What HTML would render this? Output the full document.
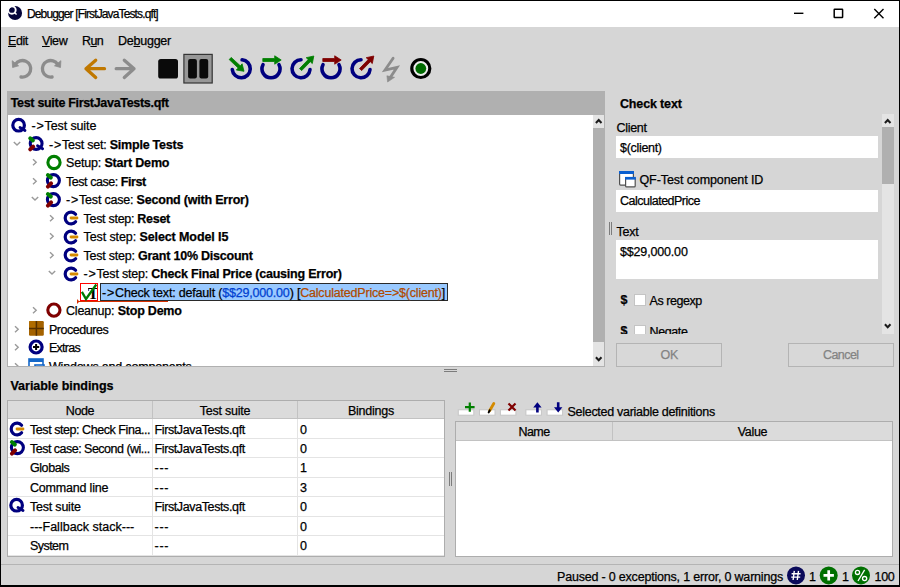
<!DOCTYPE html>
<html><head><meta charset="utf-8"><title>Debugger</title>
<style>
*{box-sizing:border-box;margin:0;padding:0}
html,body{width:900px;height:587px;overflow:hidden;background:#d6d6d6}
body{font-family:"Liberation Sans",sans-serif;font-size:12.5px;color:#000;position:relative}
.a{position:absolute}
.t{position:absolute;white-space:nowrap;line-height:16px;height:16px;letter-spacing:-0.2px;-webkit-text-stroke:0.25px}
.b{font-weight:bold}
u{text-decoration:underline;text-underline-offset:1px}
svg{position:absolute;overflow:visible}
.row{position:absolute;left:0;height:18.5px}
.cell{position:absolute;white-space:nowrap;line-height:16px;letter-spacing:-0.2px}
</style></head><body>
<!-- window frame -->
<div class="a" style="left:0;top:0;width:900px;height:27px;background:#fff"></div>
<div class="a" style="left:0;top:0;width:900px;height:1px;background:#000"></div>
<div class="a" style="left:0;top:0;width:1.200px;height:587px;background:#000"></div>
<div class="a" style="left:898.6px;top:0;width:1.4px;height:587px;background:#000"></div>
<div class="a" style="left:0;top:585.4px;width:900px;height:1.6px;background:#000"></div>

<svg style="left:8px;top:6px" width="15" height="15" viewBox="0 0 15 15"><circle cx="7.050" cy="7.050" r="7" fill="#05053a"/><circle cx="3.900" cy="4" r="3.800" fill="none" stroke="#fff" stroke-width="1.900"/><path d="M6.200 6.400L8.600 8.500" stroke="#fff" stroke-width="1.400"/><rect x="-2" y="-2" width="2" height="10" fill="#fff"/></svg>
<div class="t" style="left:27px;top:6px;font-size:12px;letter-spacing:-0.87px">Debugger [FirstJavaTests.qft]</div>
<svg style="left:793px;top:8px" width="100" height="12" viewBox="0 0 100 12"><path d="M1 5.300h9.400" stroke="#000" stroke-width="1.400" fill="none"/><rect x="41.200" y="1.200" width="8.400" height="8.400" rx="0.500" stroke="#000" stroke-width="1.500" fill="none"/><path d="M81.300 1L90.500 10.200M90.500 1L81.300 10.200" stroke="#000" stroke-width="1.400" fill="none"/></svg>


<div class="t" style="left:8px;top:32.700px;letter-spacing:-0.462px"><u>E</u>dit</div>
<div class="t" style="left:42px;top:32.700px;letter-spacing:-0.398px"><u>V</u>iew</div>
<div class="t" style="left:82px;top:32.700px;letter-spacing:-0.646px">R<u>u</u>n</div>
<div class="t" style="left:118px;top:32.700px;letter-spacing:-0.240px">De<u>b</u>ugger</div>


<svg style="left:0;top:50px" width="450" height="40" viewBox="0 50 450 40">
<!-- undo -->
<path d="M15.4 64.4 A8.3 8.3 0 1 1 21.0 77.0" fill="none" stroke="#8c8c8c" stroke-width="3.300" stroke-linecap="round"/><path d="M12.200 60.700L12.600 67.500L18.600 65.800Z" fill="#8c8c8c" stroke="#8c8c8c" stroke-width="0.800" stroke-linejoin="round"/>
<path d="M57.7 64.4 A8.3 8.3 0 1 0 52.1 77.0" fill="none" stroke="#8c8c8c" stroke-width="3.300" stroke-linecap="round"/><path d="M60.900 60.700L60.500 67.500L54.500 65.800Z" fill="#8c8c8c" stroke="#8c8c8c" stroke-width="0.800" stroke-linejoin="round"/>
<g fill="none" stroke="#c07800" stroke-width="3.300" stroke-linecap="round" stroke-linejoin="round"><path d="M86 68.700H104.500M95.700 60.200L86 68.700L95.700 77.400"/></g><g fill="none" stroke="#8c8c8c" stroke-width="3.300" stroke-linecap="round" stroke-linejoin="round"><path d="M116.200 68.700H134M124.300 60.200L134 68.700L124.300 77.400"/></g>
<!-- stop / pause -->
<rect x="158.200" y="58.900" width="19.800" height="19.600" rx="2.600" fill="#0a0a0a"/>
<rect x="183.900" y="54.400" width="28.300" height="28.600" fill="#979797" stroke="#343434" stroke-width="1.200"/>
<rect x="188.100" y="58.900" width="8.800" height="19.600" rx="2" fill="#0a0a0a"/>
<rect x="199.400" y="58.900" width="8.800" height="19.600" rx="2" fill="#0a0a0a"/>
<!-- step icons -->
<path d="M242.1 59.8 A9.0 9.0 0 1 1 232.3 69.6" fill="none" stroke="#00007f" stroke-width="3.6" stroke-linecap="round"/>
<path d="M229.2 59.6L238.2 68.0L236.3 70.0L244.0 71.3L242.1 63.8L240.3 65.8L231.2 57.4Z" fill="#007f00" stroke="#007f00" stroke-width="0.8" stroke-linejoin="round"/>
<path d="M279.0 64.7 A9.0 9.0 0 1 1 263.0 64.7" fill="none" stroke="#00007f" stroke-width="3.6" stroke-linecap="round"/>
<path d="M262.8 61.5L274.7 61.5L274.7 64.2L281.2 60.0L274.7 55.8L274.7 58.5L262.8 58.5Z" fill="#007f00" stroke="#007f00" stroke-width="0.8" stroke-linejoin="round"/>
<path d="M310.0 69.6 A9.0 9.0 0 1 1 301.0 59.8" fill="none" stroke="#00007f" stroke-width="3.6" stroke-linecap="round"/>
<path d="M301.7 70.6L310.3 61.7L312.3 63.6L313.8 56.0L306.2 57.7L308.2 59.6L299.5 68.6Z" fill="#007f00" stroke="#007f00" stroke-width="0.8" stroke-linejoin="round"/>
<path d="M339.0 64.7 A9.0 9.0 0 1 1 323.0 64.7" fill="none" stroke="#00007f" stroke-width="3.6" stroke-linecap="round"/>
<path d="M322.8 61.5L334.7 61.5L334.7 64.2L341.2 60.0L334.7 55.8L334.7 58.5L322.8 58.5Z" fill="#7f0000" stroke="#7f0000" stroke-width="0.8" stroke-linejoin="round"/>
<path d="M370.0 69.6 A9.0 9.0 0 1 1 361.0 59.8" fill="none" stroke="#00007f" stroke-width="3.6" stroke-linecap="round"/>
<path d="M361.7 70.6L370.3 61.7L372.3 63.6L373.8 56.0L366.2 57.7L368.2 59.6L359.5 68.6Z" fill="#7f0000" stroke="#7f0000" stroke-width="0.8" stroke-linejoin="round"/>
<!-- lightning -->
<path d="M393.100 58.200L385 70L397 67.300L390.300 77.500" fill="none" stroke="#8c8c8c" stroke-width="2.800" stroke-linejoin="miter" stroke-linecap="round"/>
<path d="M386.900 75.800L394.600 77.300L387.600 82Z" fill="#8c8c8c" stroke="#8c8c8c" stroke-width="0.600" stroke-linejoin="round"/>
<!-- record -->
<circle cx="420.800" cy="68.500" r="9" fill="#ececec" stroke="#000" stroke-width="3.200"/>
<circle cx="420.800" cy="68.500" r="5.400" fill="#006a00"/>
</svg>


<svg width="0" height="0" style="left:0;top:0"><defs>
<symbol id="iQ" viewBox="0 0 16 16" overflow="visible"><circle cx="7.600" cy="7.200" r="5.800" fill="none" stroke="#00007f" stroke-width="3.200"/><path d="M9 9.500L14 12.500" stroke="#00007f" stroke-width="2.800" stroke-linecap="round"/></symbol>
<symbol id="iQs" viewBox="0 0 16 16" overflow="visible"><circle cx="8.150" cy="7.500" r="5.900" fill="none" stroke="#00007f" stroke-width="3.100"/><path d="M9.500 9.800L14.600 12.800" stroke="#00007f" stroke-width="2.800" stroke-linecap="round"/><path d="M2.200 2.200L4.900 4.500" stroke="#007f00" stroke-width="3.900" stroke-linecap="round"/><path d="M2.200 13.400L5.200 10.500" stroke="#7f0000" stroke-width="3.900" stroke-linecap="round"/></symbol>
<symbol id="iD" viewBox="0 0 16 16" overflow="visible"><circle cx="8.400" cy="7.600" r="6" fill="none" stroke="#00007f" stroke-width="3.100"/><path d="M2.900 2L5.800 4.600" stroke="#007f00" stroke-width="4" stroke-linecap="round"/><path d="M2.900 13.600L6.100 10.400" stroke="#7f0000" stroke-width="4" stroke-linecap="round"/></symbol>
<symbol id="iOg" viewBox="0 0 16 16" overflow="visible"><circle cx="8" cy="7.500" r="6.100" fill="none" stroke="#007f00" stroke-width="3.100"/></symbol>
<symbol id="iOr" viewBox="0 0 16 16" overflow="visible"><circle cx="7.900" cy="7.100" r="6.100" fill="none" stroke="#7f0000" stroke-width="3.100"/></symbol>
<symbol id="iC" viewBox="0 0 16 16" overflow="visible"><path d="M12.600 4.200A5.900 5.900 0 1 0 12.600 11.800" fill="none" stroke="#00007f" stroke-width="3.200" stroke-linecap="round"/><path d="M8 8H14" stroke="#d48a00" stroke-width="2.800" stroke-linecap="round"/></symbol>
<symbol id="cr" viewBox="0 0 8 8" overflow="visible"><path d="M2 0.300L5.200 3.300L2 6.300" fill="none" stroke="#9a9a9a" stroke-width="1.400"/></symbol>
<symbol id="cd" viewBox="0 0 8 8" overflow="visible"><path d="M0.800 0.900L4 4.100L7.200 0.900" fill="none" stroke="#9a9a9a" stroke-width="1.400"/></symbol>
</defs></svg>

<div class="a" style="left:7px;top:91px;width:598px;height:276px;background:#b0b0b0"></div>
<div class="a" style="left:8px;top:114px;width:596px;height:251.700px;background:#fff;overflow:hidden" id="tree">
<svg style="left:3.0px;top:3.5px" width="16" height="16"><use href="#iQ"/></svg>
<div class="t" style="left:23.5px;top:4.0px;letter-spacing:-0.115px"><span style="letter-spacing:0.8px">-&gt;</span>Test suite</div>
<svg style="left:5.0px;top:26.5px" width="8" height="8"><use href="#cd"/></svg>
<svg style="left:20.0px;top:22.0px" width="16" height="16"><use href="#iQs"/></svg>
<div class="t" style="left:41.0px;top:22.5px;letter-spacing:-0.233px"><span style="letter-spacing:0.8px">-&gt;</span>Test set: <b>Simple Tests</b></div>
<svg style="left:22.5px;top:45.0px" width="8" height="8"><use href="#cr"/></svg>
<svg style="left:37.5px;top:40.5px" width="16" height="16"><use href="#iOg"/></svg>
<div class="t" style="left:58.0px;top:41.0px;letter-spacing:-0.177px">Setup: <b>Start Demo</b></div>
<svg style="left:22.5px;top:63.5px" width="8" height="8"><use href="#cr"/></svg>
<svg style="left:37.0px;top:59.0px" width="16" height="16"><use href="#iD"/></svg>
<div class="t" style="left:58.0px;top:59.5px;letter-spacing:-0.446px">Test case: <b>First</b></div>
<svg style="left:22.5px;top:82.0px" width="8" height="8"><use href="#cd"/></svg>
<svg style="left:37.0px;top:77.5px" width="16" height="16"><use href="#iD"/></svg>
<div class="t" style="left:58.0px;top:78.0px;letter-spacing:-0.203px"><span style="letter-spacing:0.8px">-&gt;</span>Test case: <b>Second (with Error)</b></div>
<svg style="left:40.0px;top:100.5px" width="8" height="8"><use href="#cr"/></svg>
<svg style="left:55.0px;top:96.0px" width="16" height="16"><use href="#iC"/></svg>
<div class="t" style="left:75.5px;top:96.5px;letter-spacing:-0.283px">Test step: <b>Reset</b></div>
<svg style="left:40.0px;top:119.0px" width="8" height="8"><use href="#cr"/></svg>
<svg style="left:55.0px;top:114.5px" width="16" height="16"><use href="#iC"/></svg>
<div class="t" style="left:75.5px;top:115.0px;letter-spacing:-0.096px">Test step: <b>Select Model I5</b></div>
<svg style="left:40.0px;top:137.5px" width="8" height="8"><use href="#cr"/></svg>
<svg style="left:55.0px;top:133.0px" width="16" height="16"><use href="#iC"/></svg>
<div class="t" style="left:75.5px;top:133.5px;letter-spacing:-0.226px">Test step: <b>Grant 10% Discount</b></div>
<svg style="left:40.0px;top:156.0px" width="8" height="8"><use href="#cd"/></svg>
<svg style="left:55.0px;top:151.5px" width="16" height="16"><use href="#iC"/></svg>
<div class="t" style="left:75.5px;top:152.0px;letter-spacing:-0.207px"><span style="letter-spacing:0.8px">-&gt;</span>Test step: <b>Check Final Price (causing Error)</b></div>
<div class="a" style="left:72.0px;top:168.8px;width:17.900px;height:18.500px;border:1.300px solid #f00;background:#fff"></div>
<div class="a" style="left:79.7px;top:172.3px;font-family:'Liberation Serif',serif;font-weight:bold;font-size:16.300px;line-height:16px;width:9px;overflow:hidden">T</div>
<svg style="left:72.0px;top:169.0px" width="18" height="19" viewBox="80 283 18 19"><path d="M81.900 291.900L86 299L96.300 284.500" fill="none" stroke="#007a00" stroke-width="2.300" stroke-linejoin="miter"/></svg>
<div class="a" style="left:69.0px;top:186.9px;width:91px;height:1.200px;background:#d83000"></div>
<svg style="left:68.5px;top:185.0px" width="3" height="5" viewBox="0 0 3 5"><path d="M0 0L2.400 2.500L0 5Z" fill="#d83000"/></svg>
<div class="a" style="left:92.2px;top:169.0px;width:347.500px;height:18.200px;background:#99c9ff;border:1.200px solid #2a2a2a"></div>
<div class="t" style="left:94.0px;top:170.5px;letter-spacing:-0.191px"><span style="letter-spacing:0.8px">-&gt;</span>Check text: default (<span style="color:#0040d0">$$29,000.00</span>) [<span style="color:#b04a00">CalculatedPrice=&gt;$(client)</span>]</div>
<svg style="left:22.5px;top:193.0px" width="8" height="8"><use href="#cr"/></svg>
<svg style="left:37.5px;top:188.5px" width="16" height="16"><use href="#iOr"/></svg>
<div class="t" style="left:58.0px;top:189.0px;letter-spacing:-0.211px">Cleanup: <b>Stop Demo</b></div>
<svg style="left:5.0px;top:211.5px" width="8" height="8"><use href="#cr"/></svg>
<svg style="left:20.6px;top:207.0px" width="15" height="15" viewBox="0 0 15 15"><rect x="0" y="0" width="14.800" height="14.800" rx="1.200" fill="#a46200"/><rect x="0" y="0" width="7" height="7" rx="1" fill="#b06c00"/><path d="M7.400 0V14.800M0 7.400H14.800" stroke="#553000" stroke-width="1.500"/></svg>
<div class="t" style="left:41.0px;top:207.5px;letter-spacing:-0.464px">Procedures</div>
<svg style="left:5.0px;top:230.0px" width="8" height="8"><use href="#cr"/></svg>
<svg style="left:20.0px;top:224.7px" width="16" height="16" viewBox="0 0 16 16"><circle cx="8.100" cy="8" r="6" fill="#fff" stroke="#00007f" stroke-width="3.200"/><path d="M8.100 4.900V11.100M5 8H11.200" stroke="#000" stroke-width="2"/></svg>
<div class="t" style="left:41.0px;top:226.0px;letter-spacing:-0.740px">Extras</div>
<svg style="left:5.0px;top:248.5px" width="8" height="8"><use href="#cr"/></svg>
<svg style="left:20.0px;top:244.0px" width="16" height="16" viewBox="0 0 16 16"><rect x="1" y="1" width="14" height="13" fill="#fff" stroke="#1467c8" stroke-width="1.600"/><rect x="1" y="1" width="14" height="3" fill="#1467c8"/><rect x="7" y="7" width="9" height="8" fill="#fff" stroke="#1467c8" stroke-width="1.600"/></svg>
<div class="t" style="left:41.0px;top:244.5px;letter-spacing:-0.178px">Windows and components</div>
</div>
<div class="t b" style="left:10.700px;top:95.400px;letter-spacing:-0.309px">Test suite FirstJavaTests.qft</div>
<div class="a" style="left:593px;top:115px;width:11px;height:250.700px;background:#e4e4e4"></div><div class="a" style="left:8px;top:114px;width:597px;height:0.500px;background:#b0b0b0"></div><div class="a" style="left:593px;top:114px;width:12px;height:1px;background:#b0b0b0"></div>
<div class="a" style="left:593px;top:128px;width:11.900px;height:213.600px;background:#b0b0b0"></div>
<svg style="left:594px;top:117px" width="10" height="8" viewBox="0 0 10 8"><path d="M1.900 6L4.700 3L7.500 6" fill="none" stroke="#1c1c1c" stroke-width="2"/></svg>
<svg style="left:594px;top:355px" width="10" height="8" viewBox="0 0 10 8"><path d="M1.900 2.300L4.700 5.300L7.500 2.300" fill="none" stroke="#1c1c1c" stroke-width="2"/></svg>
<div class="a" style="left:609px;top:222.300px;width:1px;height:12.600px;background:#7c7c7c"></div><div class="a" style="left:611px;top:222.300px;width:1px;height:12.600px;background:#7c7c7c"></div>
<div class="t b" style="left:620px;top:95.600px;letter-spacing:-0.153px">Check text</div>
<div class="a" style="left:612px;top:114px;width:270px;height:220px;overflow:hidden" id="det">
<div class="t" style="left:4.5px;top:6.3px;letter-spacing:-0.295px">Client</div>
<div class="a" style="left:4.0px;top:22.0px;width:262.0px;height:22.0px;background:#fff"></div>
<div class="t" style="left:8.0px;top:25.8px;letter-spacing:-0.308px">$(client)</div>
<svg style="left:6.0px;top:56.0px" width="18" height="18" viewBox="618 170 18 18"><rect x="619.600" y="171.600" width="13.800" height="13.500" rx="1" fill="#fff" stroke="#505050" stroke-width="1.200"/><rect x="619" y="171" width="15" height="3" fill="#0a5fd0"/><rect x="625.600" y="177.500" width="9.600" height="9.400" rx="1" fill="#fff" stroke="#505050" stroke-width="1.200"/><rect x="625" y="176.900" width="10.800" height="2.700" fill="#0a5fd0"/></svg>
<div class="t" style="left:27.5px;top:58.3px;letter-spacing:-0.098px">QF-Test component ID</div>
<div class="a" style="left:4.0px;top:75.6px;width:262.0px;height:22.0px;background:#fff"></div>
<div class="t" style="left:8.0px;top:79.1px;letter-spacing:-0.503px">CalculatedPrice</div>
<div class="t" style="left:4.5px;top:110.4px;">Text</div>
<div class="a" style="left:4.0px;top:126.2px;width:262.0px;height:38.8px;background:#fff"></div>
<div class="t" style="left:8.0px;top:129.6px;letter-spacing:-0.165px">$$29,000.00</div>
<div class="t b" style="left:8.5px;top:178.3px;">$</div>
<div class="a" style="left:22.0px;top:180.300px;width:11.700px;height:11.500px;background:#fff;border:1px solid #c4c4c4"></div>
<div class="t" style="left:37.5px;top:178.700px;letter-spacing:-0.442px">As regexp</div>
<div class="t b" style="left:8.5px;top:209.200px;">$</div>
<div class="a" style="left:22.0px;top:211.000px;width:11.700px;height:11.500px;background:#fff;border:1px solid #c4c4c4"></div>
<div class="t" style="left:37.5px;top:209.600px;letter-spacing:-0.385px">Negate</div>
</div>
<div class="a" style="left:882px;top:114px;width:11.900px;height:219.800px;background:#e4e4e4"></div>
<div class="a" style="left:882px;top:127px;width:11.900px;height:57px;background:#b0b0b0"></div>
<svg style="left:883.200px;top:116.500px" width="10" height="8" viewBox="0 0 10 8"><path d="M1.900 6L4.700 3L7.500 6" fill="none" stroke="#1c1c1c" stroke-width="2"/></svg>
<svg style="left:883.200px;top:322.300px" width="10" height="8" viewBox="0 0 10 8"><path d="M1.900 2.300L4.700 5.300L7.500 2.300" fill="none" stroke="#1c1c1c" stroke-width="2"/></svg>
<div class="a" style="left:616.200px;top:343px;width:105.800px;height:23.500px;border:1px solid #b4b4b4;background:#d8d8d8"></div>
<div class="t" style="left:616.500px;top:347px;width:105.500px;text-align:center;color:#838383;letter-spacing:-0.381px">OK</div>
<div class="a" style="left:788px;top:343px;width:105.500px;height:23.500px;border:1px solid #b4b4b4;background:#d8d8d8"></div>
<div class="t" style="left:788px;top:347px;width:105.500px;text-align:center;color:#838383;letter-spacing:-0.554px">Cancel</div>
<div class="a" style="left:444px;top:369px;width:13px;height:1.100px;background:#7c7c7c"></div><div class="a" style="left:444px;top:371px;width:13px;height:1.100px;background:#7c7c7c"></div>
<div class="t b" style="left:10.500px;top:377.500px;letter-spacing:-0.029px">Variable bindings</div>
<div class="a" style="left:7px;top:400px;width:437.700px;height:156.700px;background:#fff;border:1px solid #adadad;overflow:hidden" id="lt">
<div class="a" style="left:0;top:153.6px;width:436px;height:1px;background:#e4e4e4"></div>
<div class="a" style="left:0;top:0;width:436px;height:18px;background:#dbdbdb;border-bottom:1px solid #c2c2c2"></div>
<div class="a" style="left:144px;top:0;width:1px;height:17.500px;background:#c2c2c2"></div>
<div class="a" style="left:144px;top:17.500px;width:1px;height:140px;background:#e4e4e4"></div>
<div class="a" style="left:289px;top:0;width:1px;height:17.500px;background:#c2c2c2"></div>
<div class="a" style="left:289px;top:17.500px;width:1px;height:140px;background:#e4e4e4"></div>
<div class="t" style="left:0.0px;top:2.0px;width:144.0px;text-align:center;letter-spacing:-0.398px">Node</div>
<div class="t" style="left:145.0px;top:2.0px;width:144.0px;text-align:center;letter-spacing:-0.211px">Test suite</div>
<div class="t" style="left:290.0px;top:2.0px;width:146.0px;text-align:center;letter-spacing:-0.232px">Bindings</div>
<svg style="left:0.7px;top:19.5px" width="16" height="16"><use href="#iC"/></svg>
<div class="t" style="left:22.0px;top:20.5px;letter-spacing:-0.442px">Test step: Check Fina...</div>
<div class="t" style="left:146.5px;top:20.5px;letter-spacing:-0.386px">FirstJavaTests.qft</div>
<div class="t" style="left:292.0px;top:20.5px">0</div>
<div class="a" style="left:0;top:36.9px;width:436px;height:1px;background:#e4e4e4"></div>
<svg style="left:0.7px;top:38.9px" width="16" height="16"><use href="#iD"/></svg>
<div class="t" style="left:22.0px;top:39.9px;letter-spacing:-0.513px">Test case: Second (wi...</div>
<div class="t" style="left:146.5px;top:39.9px;letter-spacing:-0.386px">FirstJavaTests.qft</div>
<div class="t" style="left:292.0px;top:39.9px">0</div>
<div class="a" style="left:0;top:56.4px;width:436px;height:1px;background:#e4e4e4"></div>
<div class="t" style="left:22.0px;top:59.4px;letter-spacing:-0.442px">Globals</div>
<div class="t" style="left:146.5px;top:59.4px;letter-spacing:0.767px">---</div>
<div class="t" style="left:292.0px;top:59.4px">1</div>
<div class="a" style="left:0;top:75.9px;width:436px;height:1px;background:#e4e4e4"></div>
<div class="t" style="left:22.0px;top:78.8px;letter-spacing:-0.191px">Command line</div>
<div class="t" style="left:146.5px;top:78.8px;letter-spacing:0.767px">---</div>
<div class="t" style="left:292.0px;top:78.8px">3</div>
<div class="a" style="left:0;top:95.3px;width:436px;height:1px;background:#e4e4e4"></div>
<svg style="left:0.7px;top:97.3px" width="16" height="16"><use href="#iQ"/></svg>
<div class="t" style="left:22.0px;top:98.3px;letter-spacing:-0.211px">Test suite</div>
<div class="t" style="left:146.5px;top:98.3px;letter-spacing:-0.386px">FirstJavaTests.qft</div>
<div class="t" style="left:292.0px;top:98.3px">0</div>
<div class="a" style="left:0;top:114.8px;width:436px;height:1px;background:#e4e4e4"></div>
<div class="t" style="left:22.0px;top:117.7px;letter-spacing:0.006px">---Fallback stack---</div>
<div class="t" style="left:146.5px;top:117.7px;letter-spacing:0.767px">---</div>
<div class="t" style="left:292.0px;top:117.7px">0</div>
<div class="a" style="left:0;top:134.2px;width:436px;height:1px;background:#e4e4e4"></div>
<div class="t" style="left:22.0px;top:137.2px;letter-spacing:-0.565px">System</div>
<div class="t" style="left:146.5px;top:137.2px;letter-spacing:0.767px">---</div>
<div class="t" style="left:292.0px;top:137.2px">0</div>
</div>
<div class="a" style="left:449px;top:472.300px;width:1px;height:13.400px;background:#7c7c7c"></div><div class="a" style="left:450.800px;top:472.300px;width:1px;height:13.400px;background:#7c7c7c"></div>
<svg style="left:0;top:398px" width="900" height="22" viewBox="0 398 900 22"><rect x="458.3" y="409.800" width="15.500" height="5.400" fill="#fff" stroke="#c6c6c6" stroke-width="1"/><rect x="479.5" y="409.800" width="15.500" height="5.400" fill="#fff" stroke="#c6c6c6" stroke-width="1"/><rect x="500.4" y="409.800" width="15.500" height="5.400" fill="#fff" stroke="#c6c6c6" stroke-width="1"/><rect x="525.9" y="409.800" width="15.500" height="5.400" fill="#fff" stroke="#c6c6c6" stroke-width="1"/><rect x="547.1" y="409.800" width="15.500" height="5.400" fill="#fff" stroke="#c6c6c6" stroke-width="1"/><path d="M469.800 402.500V411.700M465 407.100H474.600" stroke="#007f00" stroke-width="2.200" fill="none"/><path d="M489.600 410.800L493.800 403.500" stroke="#d48a00" stroke-width="2.800" stroke-linecap="round" fill="none"/><path d="M489.700 410.400L488.700 412.400" stroke="#000" stroke-width="2" stroke-linecap="round"/><path d="M508.500 403.500L515.500 410.500M515.500 403.500L508.500 410.500" stroke="#7f0000" stroke-width="2.200" fill="none"/><path d="M537.400 402.300L541.600 407.600H538.700V412.600H536.100V407.600H533.200Z" fill="#00007f"/><path d="M558.200 412.600L562.400 407.300H559.500V402.300H556.900V407.300H554Z" fill="#00007f"/></svg>
<div class="t" style="left:567.500px;top:403.900px;letter-spacing:-0.285px">Selected variable definitions</div>
<div class="a" style="left:455px;top:421px;width:438px;height:135.700px;background:#fff;border:1px solid #adadad;overflow:hidden">
<div class="a" style="left:0;top:0;width:436px;height:18.500px;background:#dbdbdb;border-bottom:1px solid #c2c2c2"></div>
<div class="a" style="left:156px;top:0;width:1px;height:18.500px;background:#c2c2c2"></div>
<div class="t" style="left:0;top:2px;width:156px;text-align:center;letter-spacing:-0.586px">Name</div>
<div class="t" style="left:157px;top:2px;width:279px;text-align:center;letter-spacing:-0.289px">Value</div>
</div>
<div class="a" style="left:1px;top:563.800px;width:898px;height:1px;background:#b4b4b4"></div>
<div class="t" style="left:557px;top:568.600px;letter-spacing:-0.194px">Paused - 0 exceptions, 1 error, 0 warnings</div>
<svg style="left:0;top:565px" width="900" height="22" viewBox="0 565 900 22"><circle cx="796" cy="575.400" r="9" fill="#0a0a5a"/><path d="M794.300 570.800L793.100 580M798.500 570.800L797.300 580M791.600 573.700H800.600M791.200 577.100H800.200" stroke="#fff" stroke-width="1.400" fill="none"/><circle cx="828.700" cy="575.400" r="9" fill="#007000"/><path d="M828.700 570.200V580.600M823.500 575.400H833.900" stroke="#fff" stroke-width="2.700" fill="none"/><circle cx="861" cy="575.400" r="9" fill="#007000"/><circle cx="857.500" cy="572.400" r="2.100" fill="none" stroke="#fff" stroke-width="1.300"/><circle cx="864.600" cy="578.600" r="2.100" fill="none" stroke="#fff" stroke-width="1.300"/><path d="M864.600 569.800L858 581" stroke="#fff" stroke-width="1.300"/></svg>
<div class="t" style="left:809px;top:568.600px">1</div>
<div class="t" style="left:842px;top:568.600px">1</div>
<div class="t" style="left:874.500px;top:568.600px;letter-spacing:-0.286px">100</div>
</body></html>
